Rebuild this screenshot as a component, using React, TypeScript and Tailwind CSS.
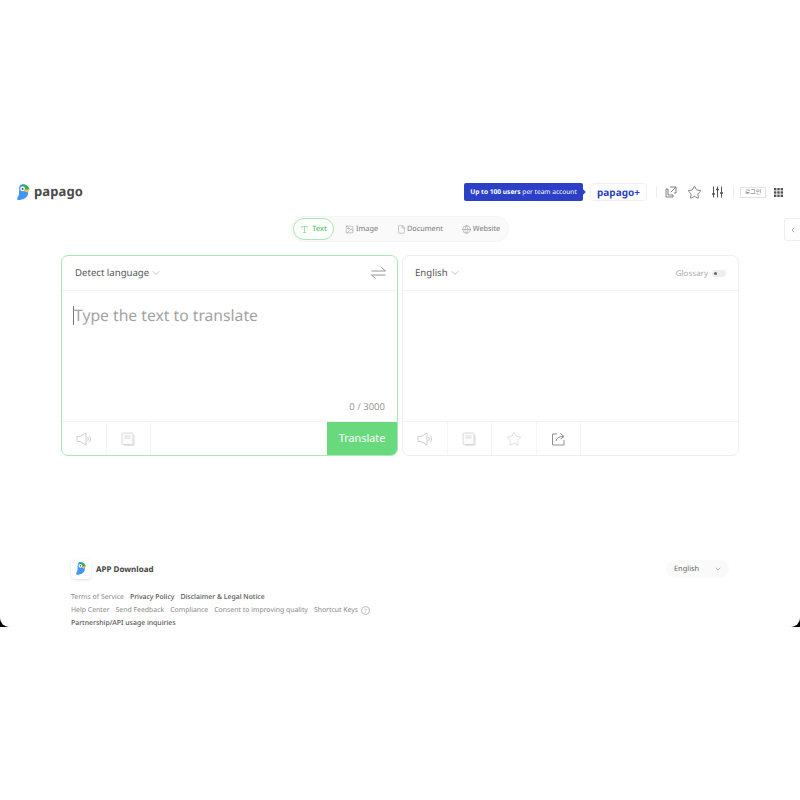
import { ChevronDown, ChevronLeft, File, Globe, Image, Star, Type } from 'lucide-react';

const font = { fontFamily: '"Noto Sans", "Noto Sans CJK KR", sans-serif' };

function Parrot({ size }: { size: number }) {
  return (
    <svg width={size} height={size * 1.2} viewBox="0 0 20 24">
      <path d="M5 1 C9 -1 15 1 16 5 L16 13 C16 19 9 23 2 23 C0 23 0 21 1 19 C3 16 3 13 3 9 C3 6 3 3 5 1 Z" fill="#3d97f5" />
      <path d="M7 1 C12 0 17 3 18 8 L11 8 C11 5 9 3 7 1 Z" fill="#2fb45a" />
      <circle cx="8" cy="7" r="3.4" fill="#fff" />
      <circle cx="8" cy="7" r="1.3" fill="#333" />
      <path d="M11 8 L18 8 L15 12 L11 11 Z" fill="#f6c23c" />
    </svg>
  );
}

function Speaker() {
  return (
    <svg width="16" height="14" viewBox="0 0 16 14" fill="none" stroke="#c8c8c8" strokeWidth="0.9">
      <path d="M1 4.5 H4 L10 1 V13 L4 9.5 H1 Z" />
      <path d="M11.5 5 C12.5 6 12.5 8 11.5 9" />
      <path d="M13 3.5 C15 5.5 15 8.5 13 10.5" />
    </svg>
  );
}

function Note() {
  return (
    <svg width="14" height="14" viewBox="0 0 14 14" fill="none" stroke="#d0d0d0" strokeWidth="0.8">
      <rect x="1" y="1" width="11" height="11.5" rx="1" fill="#fcfcfc" />
      <path d="M13 3 V13.2 H3" />
      <path d="M3.5 4 H9.5 M3.5 6 H9.5" />
    </svg>
  );
}

function Share() {
  return (
    <svg width="15" height="14" viewBox="0 0 15 14" fill="none" stroke="#8f8f8f" strokeWidth="1">
      <path d="M6 2 H1.5 V13 H13 V8" />
      <path d="M5 9 C5.5 6 8 4.5 12 4.5 M9.5 1.5 L13 4.5 L9.5 7" />
    </svg>
  );
}

function Swap() {
  return (
    <svg className="-mt-[2px]" width="15" height="12" viewBox="0 0 15 12" fill="none" stroke="#8a8a8a" strokeWidth="0.9">
      <path d="M0.5 4 H14.5 L10.5 0.5" />
      <path d="M14.5 8 H0.5 L4.5 11.5" />
    </svg>
  );
}

function FooterCell({ children }: { children: React.ReactNode }) {
  return <div className="w-[44.5px] h-full flex items-center justify-center border-r border-[#f5f5f5]">{children}</div>;
}

export default function App() {
  return (
    <div className="w-[800px] h-[800px] bg-white overflow-hidden pt-[172px] [text-rendering:geometricPrecision]" style={font}>
      <div className="bg-black h-[455px]">
        <div className="relative bg-white h-full rounded-b-[9px]">
          <header className="h-10 flex items-center pl-[17px] pr-[17px]">
            <Parrot size={14} />
            <span className="ml-[3px] text-[13px] font-bold text-[#4a4a4a] tracking-[0.1px]">papago</span>
            <div className="ml-auto flex items-center">
              <div className="relative h-[18px] w-[119px] rounded-[2px] bg-[#2b3fc7] flex items-center justify-center text-[6.6px] text-white whitespace-nowrap">
                <span className="font-bold">Up to 100 users</span>&nbsp;per team account
                <span className="absolute right-[-2px] top-[7px] w-1 h-1 rotate-45 bg-[#2b3fc7]" />
              </div>
              <div className="ml-[7px] h-[18px] w-[57px] rounded-[4px] border border-[#f0f0f0] flex items-center justify-center text-[10px] font-bold text-[#2b3fc7]">
                papago+
              </div>
              <div className="ml-[9px] w-px h-3 bg-[#eeeeee]" />
              <div className="ml-2 w-[12px] h-[12px] flex items-center justify-center">
                <svg width="12" height="12" viewBox="0 0 12 12" fill="none" stroke="#6f6f6f" strokeWidth="0.9">
                  <path d="M5 1 H11 V7 H9 M11 1 L6 6" />
                  <path d="M3 3 H1 V11 H8 V9 M3 3 V9 H8" />
                </svg>
              </div>
              <Star size={15} strokeWidth={1.2} className="ml-[10px] text-[#5c5c5c]" />
              <svg className="ml-[10px]" width="11" height="12" viewBox="0 0 11 12" fill="none" stroke="#555" strokeWidth="1">
                <path d="M1.5 0.5 V11.5 M5.5 0.5 V11.5 M9.5 0.5 V11.5" />
                <path d="M0 8 H3 M4 3.5 H7 M8 7 H11" strokeWidth="1.5" />
              </svg>
              <div className="ml-[10px] w-px h-3 bg-[#eeeeee]" />
              <div className="ml-[6px] w-[26px] h-[11px] border border-[#e2e2e2] flex items-center justify-center text-[6px] text-[#666666]">로그인</div>
              <svg className="ml-[8px]" width="9" height="9" viewBox="0 0 9 9" fill="#555">
                <rect x="0" y="0" width="2.4" height="2.4" />
                <rect x="3.3" y="0" width="2.4" height="2.4" />
                <rect x="6.6" y="0" width="2.4" height="2.4" />
                <rect x="0" y="3.3" width="2.4" height="2.4" />
                <rect x="3.3" y="3.3" width="2.4" height="2.4" />
                <rect x="6.6" y="3.3" width="2.4" height="2.4" />
                <rect x="0" y="6.6" width="2.4" height="2.4" />
                <rect x="3.3" y="6.6" width="2.4" height="2.4" />
                <rect x="6.6" y="6.6" width="2.4" height="2.4" />
              </svg>
            </div>
          </header>

          <div className="absolute right-0 top-[46px] w-4 h-[23px] border border-r-0 border-[#eeeeee] rounded-l-[4px] flex items-center justify-center bg-white">
            <ChevronLeft size={8} className="text-[#777777]" />
          </div>

          <div className="mt-1 flex justify-center">
            <nav className="w-[218px] h-[26px] rounded-full bg-[#fafafa] border border-[#f4f4f4] flex items-center text-[7.3px] text-[#777777]">
              <div className="shrink-0 ml-[1px] w-[41px] h-[22px] rounded-full bg-white border border-[#a9e8b4] flex items-center justify-center gap-[3px] text-[#4fc763] font-medium">
                <Type size={9} strokeWidth={1.3} />
                Text
              </div>
              <div className="ml-[11px] flex items-center gap-[2px]">
                <Image size={9} strokeWidth={1.1} />
                Image
              </div>
              <div className="ml-[19px] flex items-center gap-[1px]">
                <File size={9} strokeWidth={1.1} />
                Document
              </div>
              <div className="ml-[19px] flex items-center gap-[2px]">
                <Globe size={9} strokeWidth={1.1} />
                Website
              </div>
            </nav>
          </div>

          <main className="mt-[13px] px-[61px] flex gap-1">
            <section className="w-[337px] h-[201px] rounded-[7px] border border-[#a9e8b4] flex flex-col overflow-hidden">
              <div className="h-[35px] shrink-0 border-b border-[#f3f3f3] flex items-center justify-between pt-[1px] pl-[13px] pr-[11px] text-[9.6px] text-[#555555]">
                <span className="flex items-center gap-[1px]">
                  Detect language
                  <ChevronDown size={12} strokeWidth={0.9} className="text-[#777777]" />
                </span>
                <Swap />
              </div>
              <div className="relative flex-1 pl-[11px] pt-[12px]">
                <div className="flex items-center text-[15.7px] text-[#a3a3a3] leading-6">
                  <span className="w-px h-[19px] bg-[#777777]" />
                  Type the text to translate
                </div>
                <span className="absolute right-3 bottom-[7px] text-[9.5px] text-[#999999]">0 / 3000</span>
              </div>
              <div className="h-[34px] shrink-0 border-t border-[#f3f3f3] flex items-center">
                <FooterCell><Speaker /></FooterCell>
                <FooterCell><Note /></FooterCell>
                <button className="ml-auto w-[70px] h-full bg-[#68d97c] text-white text-[10.8px] flex items-center justify-center">Translate</button>
              </div>
            </section>

            <section className="w-[337px] h-[201px] rounded-[7px] border border-[#eeeeee] flex flex-col overflow-hidden">
              <div className="h-[35px] shrink-0 border-b border-[#f3f3f3] flex items-center justify-between pt-[1px] pl-[12px] pr-[12px] text-[9.6px] text-[#555555]">
                <span className="flex items-center gap-[1px]">
                  English
                  <ChevronDown size={12} strokeWidth={0.9} className="text-[#777777]" />
                </span>
                <span className="flex items-center gap-[4px] text-[8px] text-[#aaaaaa]">
                  Glossary
                  <span className="w-[14px] h-[7px] rounded-full bg-[#eeeeee] flex items-center pl-[2px]">
                    <span className="w-[3px] h-[3px] rounded-full bg-[#666666]" />
                  </span>
                </span>
              </div>
              <div className="flex-1" />
              <div className="h-[34px] shrink-0 border-t border-[#f3f3f3] flex items-center">
                <FooterCell><Speaker /></FooterCell>
                <FooterCell><Note /></FooterCell>
                <FooterCell><Star size={16} strokeWidth={0.8} className="text-[#c4c4c4]" /></FooterCell>
                <FooterCell><Share /></FooterCell>
              </div>
            </section>
          </main>

          <footer className="mt-[103px] pl-[71px] pr-[71px]">
            <div className="flex items-center">
              <div className="w-[20px] h-[20px] rounded-[4px] bg-white shadow-[0_1px_3px_rgba(0,0,0,0.12)] flex items-center justify-center">
                <Parrot size={11} />
              </div>
              <span className="ml-[5px] pt-[1px] text-[8px] font-bold text-[#444444]">APP Download</span>
              <div className="ml-auto w-[63px] h-[18px] rounded-full bg-[#fafafa] flex items-center justify-between pl-2 pr-[7px] text-[7.4px] text-[#666666]">
                <span className="pt-[2px]">English</span>
                <ChevronDown size={8} strokeWidth={1.3} />
              </div>
            </div>
            <div className="mt-[12px] flex gap-[6px] text-[6.9px] leading-[13px] text-[#888888]">
              <span>Terms of Service</span>
              <span className="font-medium text-[#555555]">Privacy Policy</span>
              <span className="font-medium text-[#555555]">Disclaimer &amp; Legal Notice</span>
            </div>
            <div className="flex items-center gap-[6px] text-[6.9px] leading-[13px] text-[#888888]">
              <span>Help Center</span>
              <span>Send Feedback</span>
              <span>Compliance</span>
              <span>Consent to improving quality</span>
              <span>Shortcut Keys</span>
              <span className="-ml-[3px] w-[9px] h-[9px] rounded-full border border-[#bbbbbb] flex items-center justify-center text-[6px] leading-none text-[#aaaaaa]">?</span>
            </div>
            <div className="text-[6.9px] leading-[13px] font-medium text-[#555555]">Partnership/API usage inquiries</div>
          </footer>
        </div>
      </div>
    </div>
  );
}
